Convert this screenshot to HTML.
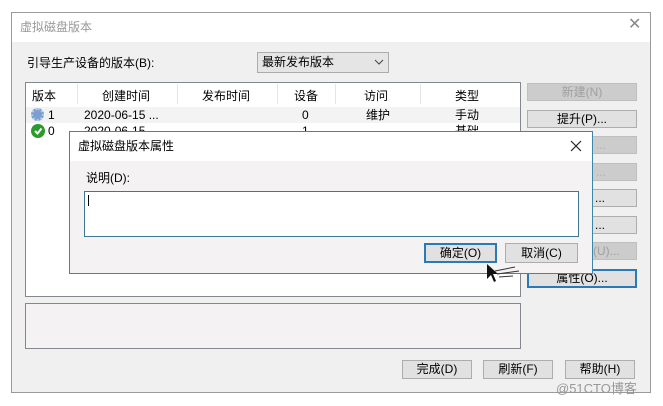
<!DOCTYPE html>
<html><head><meta charset="utf-8"><style>
*{margin:0;padding:0;box-sizing:border-box}
body{width:663px;height:406px;background:#fff;position:relative;overflow:hidden;font-family:"Liberation Sans","Noto Sans CJK SC",sans-serif;font-size:12px;color:#000}
.a{position:absolute}
.btn{position:absolute;background:#e1e1e1;border:1px solid #adadad;text-align:center;line-height:16px;font-size:12px}
.dis{color:#a0a0a0;background:#cccccc;border-color:#bfbfbf}
.t{position:absolute;white-space:nowrap;line-height:14px}
.cs{position:absolute;top:84px;width:1px;height:20px;background:#e5e5e5}
</style></head><body>
<div class="a" style="left:11px;top:12px;width:640px;height:381px;border:1px solid #9a9a9a;background:#f0f0f0"></div>
<div class="a" style="left:12px;top:13px;width:638px;height:29px;background:#fff"></div>
<div class="t" style="left:20px;top:20px;color:#999">虚拟磁盘版本</div>
<div class="t" style="left:628px;top:18px;font-size:16px;color:#888">✕</div>
<div class="t" style="left:27px;top:56px">引导生产设备的版本(B):</div>
<div class="a" style="left:257px;top:52px;width:132px;height:21px;background:#e5e5e5;border:1px solid #acacac"></div>
<div class="t" style="left:262px;top:55px">最新发布版本</div>
<svg class="a" style="left:374px;top:58px" width="10" height="8"><path d="M1 2 L5 6 L9 2" stroke="#444" fill="none"/></svg>
<div class="a" style="left:25px;top:82px;width:496px;height:215px;background:#fff;border:1px solid #828790"></div>
<div class="cs" style="left:77px"></div><div class="cs" style="left:177px"></div><div class="cs" style="left:277px"></div><div class="cs" style="left:335px"></div><div class="cs" style="left:420px"></div>
<div class="t" style="left:32px;top:89px">版本</div>
<div class="t" style="left:102px;top:89px">创建时间</div>
<div class="t" style="left:202px;top:89px">发布时间</div>
<div class="t" style="left:294px;top:89px">设备</div>
<div class="t" style="left:364px;top:89px">访问</div>
<div class="t" style="left:455px;top:89px">类型</div>
<div class="a" style="left:26px;top:107px;width:494px;height:16px;background:#f3f3f3"></div>
<div class="a" style="left:31px;top:108px;width:13px;height:13px;border-radius:50%;background:#7a9fd0;border:2px dotted #b9cde8"></div>
<div class="t" style="left:48px;top:108px">1</div>
<div class="t" style="left:84px;top:108px">2020-06-15 ...</div>
<div class="t" style="left:302px;top:108px">0</div>
<div class="t" style="left:366px;top:108px">维护</div>
<div class="t" style="left:455px;top:108px">手动</div>
<div class="a" style="left:31px;top:124px;width:14px;height:14px;border-radius:50%;background:#2c9a2c"></div>
<svg class="a" style="left:31px;top:124px" width="14" height="14"><path d="M4 7 L6.5 9.5 L10.5 4.5" stroke="#fff" stroke-width="2" fill="none"/></svg>
<div class="t" style="left:48px;top:124px">0</div>
<div class="t" style="left:84px;top:124px">2020-06-15</div>
<div class="t" style="left:302px;top:124px">1</div>
<div class="t" style="left:455px;top:124px">基础</div>
<div class="a" style="left:25px;top:303px;width:496px;height:46px;background:#f4f2f3;border:1px solid #828790"></div>
<div class="btn dis" style="left:527px;top:83px;width:110px;height:18px">新建(N)</div>
<div class="btn" style="left:527px;top:110px;width:110px;height:18px">提升(P)...</div>
<div class="btn dis" style="left:527px;top:136px;width:110px;height:18px"></div>
<div class="btn dis" style="left:527px;top:163px;width:110px;height:18px"></div>
<div class="btn" style="left:527px;top:189px;width:110px;height:18px"></div>
<div class="btn" style="left:527px;top:216px;width:110px;height:18px"></div>
<div class="btn dis" style="left:527px;top:242px;width:110px;height:18px"></div>
<div class="t" style="left:596px;top:138px;color:#b0b0b0">...</div>
<div class="t" style="left:596px;top:165px;color:#b0b0b0">...</div>
<div class="t" style="left:595px;top:191px">...</div>
<div class="t" style="left:595px;top:218px">...</div>
<div class="t" style="left:593px;top:244px;color:#a0a0a0">(U)...</div>
<div class="btn" style="left:527px;top:269px;width:110px;height:19px;border:2px solid #2a7ab8;line-height:15px">属性(O)...</div>
<div class="btn" style="left:402px;top:360px;width:70px;height:19px">完成(D)</div>
<div class="btn" style="left:483px;top:360px;width:70px;height:19px">刷新(F)</div>
<div class="btn" style="left:565px;top:360px;width:70px;height:19px">帮助(H)</div>
<div class="t" style="left:556px;top:382px;color:#999;font-size:13px">@51CTO博客</div>
<!-- dialog -->
<div class="a" style="left:69px;top:131px;width:524px;height:143px;background:#f4f2f3;border:1px solid #3b86ad"></div>
<div class="a" style="left:70px;top:132px;width:522px;height:29px;background:#fff"></div>
<div class="t" style="left:78px;top:139px">虚拟磁盘版本属性</div>
<svg class="a" style="left:570px;top:140px" width="12" height="12"><path d="M1 1 L11 11 M11 1 L1 11" stroke="#222" stroke-width="1.2"/></svg>
<div class="t" style="left:86px;top:171px">说明(D):</div>
<div class="a" style="left:84px;top:191px;width:495px;height:46px;background:#fff;border:1px solid #3f7690"></div>
<div class="a" style="left:88px;top:195px;width:1px;height:11px;background:#000"></div>
<div class="btn" style="left:424px;top:243px;width:73px;height:20px;border:2px solid #2a7ab8;line-height:16px">确定(O)</div>
<div class="btn" style="left:505px;top:243px;width:73px;height:20px;line-height:18px">取消(C)</div>
<svg class="a" style="left:485px;top:263px" width="36" height="22"><path d="M2 1 L2 16 L6 12 L9 19 L11 18 L8 11 L13 11 Z" fill="#111"/><path d="M10 8 L30 4 M12 11 L34 8 M14 14 L28 13" stroke="#333" stroke-width="1"/></svg>
</body></html>
